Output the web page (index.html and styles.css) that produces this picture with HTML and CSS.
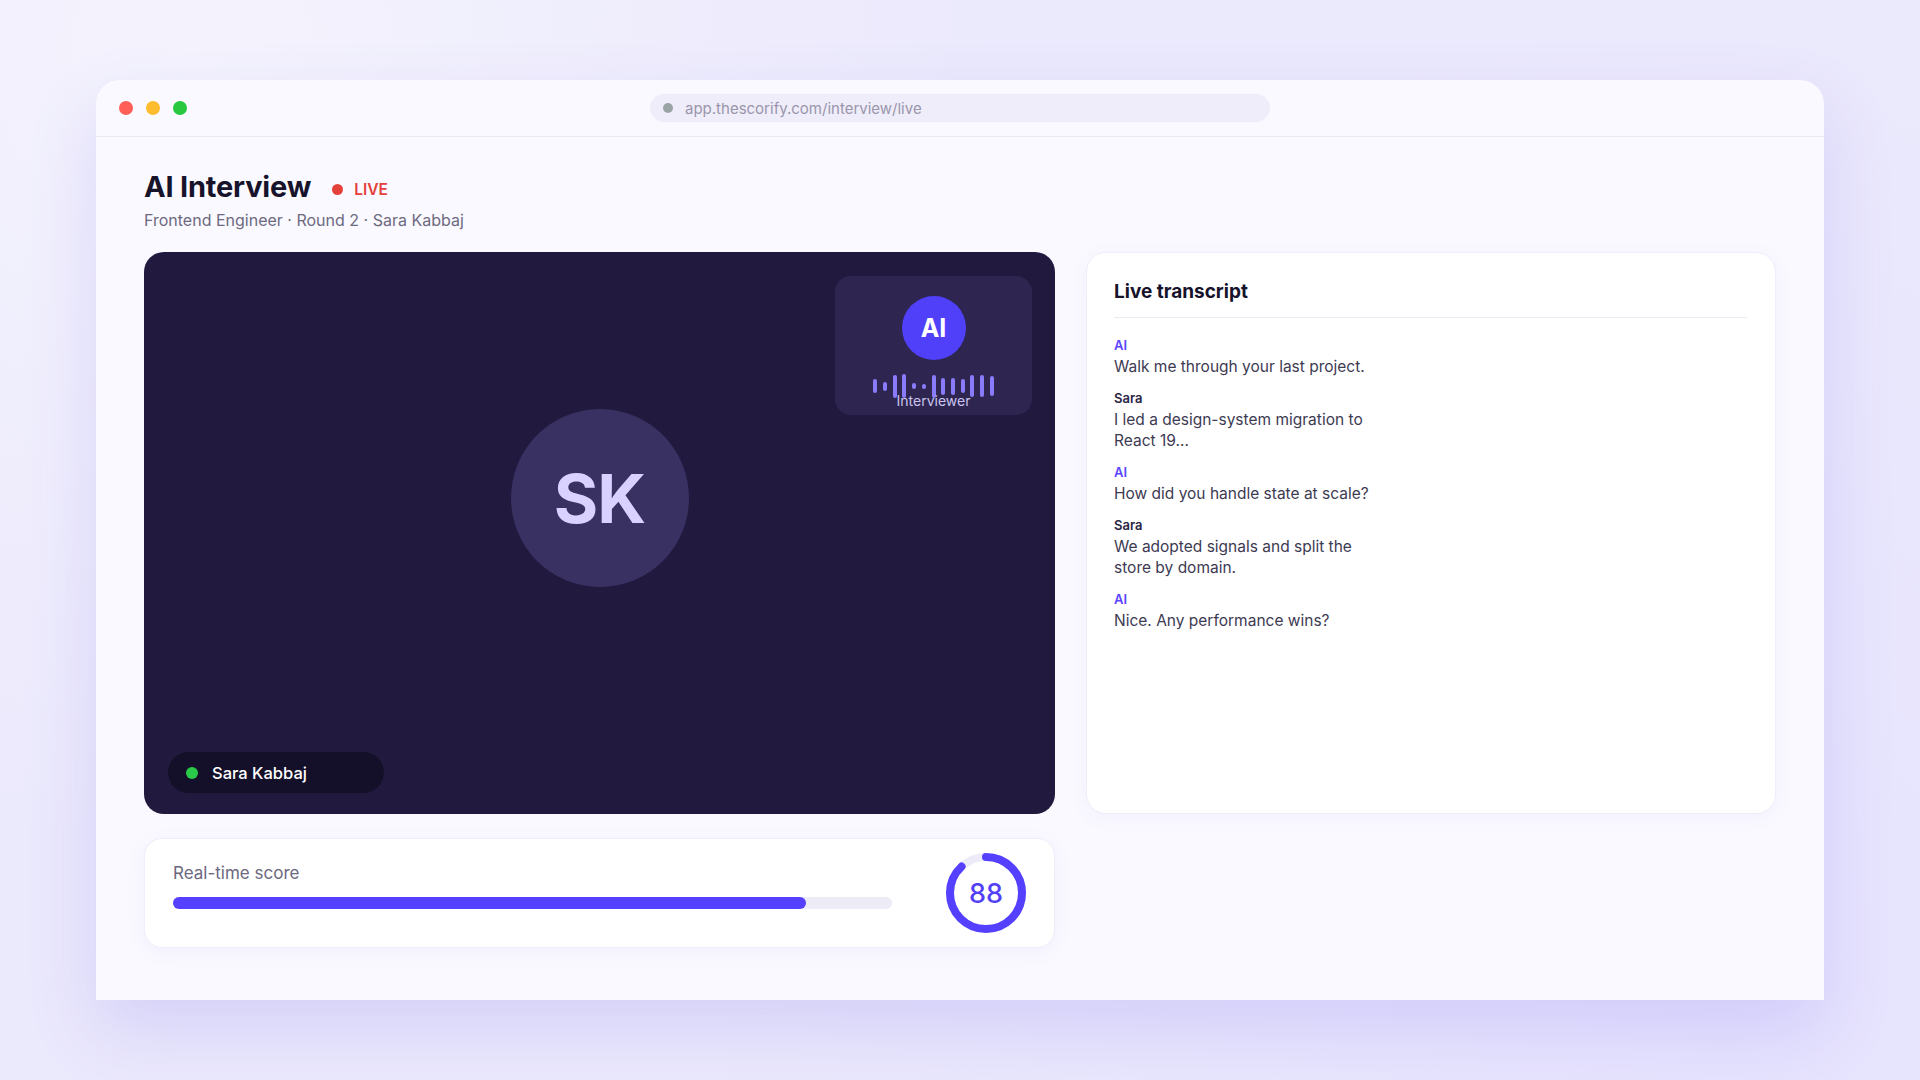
FILE: index.html
```html
<!DOCTYPE html>
<html lang="en">
<head>
<meta charset="UTF-8">
<meta name="viewport" content="width=device-width, initial-scale=1.0">
<title>AI Interview · Live</title>
<link rel="stylesheet" href="styles.css">
</head>
<body>
<div class="window">
  <div class="titlebar">
    <div class="dots">
      <span class="dot red"></span>
      <span class="dot yellow"></span>
      <span class="dot green"></span>
    </div>
    <div class="url">
      <span class="url-dot"></span>
      <span>app.thescorify.com/interview/live</span>
    </div>
    <div></div>
  </div>

  <main class="content">
    <div class="heading">
      <h1>AI Interview</h1>
      <span class="live"><span class="live-dot"></span>LIVE</span>
    </div>
    <p class="subtitle">Frontend Engineer · Round 2 · Sara Kabbaj</p>

    <div class="layout">
      <section class="stage">
        <div class="avatar">SK</div>

        <div class="ai-tile">
          <div class="ai-avatar">AI</div>
          <div class="wave">
            <span style="height:14px"></span>
            <span style="height:9px"></span>
            <span style="height:23px"></span>
            <span style="height:24px"></span>
            <span style="height:6px"></span>
            <span style="height:5px"></span>
            <span style="height:23px"></span>
            <span style="height:17px"></span>
            <span style="height:17px"></span>
            <span style="height:14px"></span>
            <span style="height:22px"></span>
            <span style="height:22px"></span>
            <span style="height:20px"></span>
          </div>
          <div class="ai-label">Interviewer</div>
        </div>

        <div class="name-pill">
          <span class="online"></span>
          Sara Kabbaj
        </div>
      </section>

      <aside class="transcript">
        <h2>Live transcript</h2>
        <div class="messages">
          <div class="msg">
            <div class="who ai">AI</div>
            <p>Walk me through your last project.</p>
          </div>
          <div class="msg">
            <div class="who">Sara</div>
            <p>I led a design-system migration to React 19…</p>
          </div>
          <div class="msg">
            <div class="who ai">AI</div>
            <p>How did you handle state at scale?</p>
          </div>
          <div class="msg">
            <div class="who">Sara</div>
            <p>We adopted signals and split the store by domain.</p>
          </div>
          <div class="msg">
            <div class="who ai">AI</div>
            <p>Nice. Any performance wins?</p>
          </div>
        </div>
      </aside>

      <section class="score-card">
        <div class="score-info">
          <div class="score-label">Real-time score</div>
          <div class="bar"><div class="bar-fill" style="width:88%"></div></div>
        </div>
        <div class="ring">
          <svg width="80" height="80" viewBox="0 0 80 80">
            <circle cx="40" cy="40" r="36" fill="none" stroke="#ecebf7" stroke-width="8"/>
            <circle cx="40" cy="40" r="36" fill="none" stroke="#5540ff" stroke-width="8"
              stroke-linecap="round" stroke-dasharray="199 227" transform="rotate(-90 40 40)"/>
          </svg>
          <span class="ring-value">88</span>
        </div>
      </section>
    </div>
  </main>
</div>
</body>
</html>
```

FILE: styles.css
```css
body {
  margin: 0;
  min-height: 1080px;
  font-family: 'Inter', 'Noto Sans', sans-serif;
  background:
    radial-gradient(circle at 10% 5%, #f4f3fd 0%, rgba(244, 243, 253, 0) 40%),
    radial-gradient(circle at 90% 95%, #e6e3fe 0%, rgba(230, 227, 254, 0) 50%),
    #ebe9fc;
  overflow: hidden;
}
.window {
  margin: 80px 96px 0;
  height: 920px;
  background: #faf9ff;
  border-radius: 24px 24px 0 0;
  box-shadow: 0 30px 70px rgba(100, 80, 230, 0.16);
}
.titlebar {
  height: 56px;
  display: grid;
  grid-template-columns: 1fr 620px 1fr;
  align-items: center;
  padding: 0 23px;
  border-bottom: 1px solid #ece9f7;
}
.dots {
  display: flex;
  gap: 13px;
}
.dot {
  width: 14px;
  height: 14px;
  border-radius: 50%;
}
.dot.red { background: #ff5f57; }
.dot.yellow { background: #febc2e; }
.dot.green { background: #28c840; }
.url {
  height: 28px;
  border-radius: 14px;
  background: #efedf9;
  display: flex;
  align-items: center;
  gap: 12px;
  padding: 0 13px;
  font-size: 15px;
  color: #9a96ad;
}
.url-dot {
  width: 10px;
  height: 10px;
  border-radius: 50%;
  background: #9aa4a4;
}

.content {
  padding: 33px 48px 0;
}
.heading {
  display: flex;
  align-items: center;
}
h1 {
  margin: 0;
  font-size: 29px;
  line-height: 34px;
  font-weight: 700;
  color: #16132b;
  letter-spacing: -0.2px;
}
.live {
  display: flex;
  align-items: center;
  gap: 11px;
  margin-left: 21px;
  margin-top: 4px;
  font-size: 15.5px;
  font-weight: 600;
  color: #e5403a;
}
.live-dot {
  width: 11px;
  height: 11px;
  border-radius: 50%;
  background: #e5403a;
}
.subtitle {
  margin: 6px 0 0;
  font-size: 16px;
  line-height: 20px;
  color: #6d6a80;
}

.layout {
  margin-top: 22px;
  display: grid;
  grid-template-columns: 911px 1fr;
  grid-template-rows: 562px auto;
  column-gap: 31px;
  row-gap: 24px;
}

/* video stage */
.stage {
  position: relative;
  background: #211a3e;
  border-radius: 20px;
  display: flex;
  align-items: center;
  justify-content: center;
  padding-bottom: 70px;
  box-sizing: border-box;
}
.avatar {
  width: 178px;
  height: 178px;
  border-radius: 50%;
  background: #3a3163;
  color: #d9d1ff;
  font-size: 68px;
  font-weight: 700;
  letter-spacing: -1px;
  display: flex;
  align-items: center;
  justify-content: center;
}
.ai-tile {
  position: absolute;
  top: 24px;
  right: 23px;
  width: 197px;
  height: 139px;
  box-sizing: border-box;
  padding-top: 20px;
  border-radius: 16px;
  background: #2e2651;
  display: flex;
  flex-direction: column;
  align-items: center;
}
.ai-avatar {
  width: 64px;
  height: 64px;
  border-radius: 50%;
  background: #5040fa;
  color: #fff;
  font-size: 25px;
  font-weight: 700;
  display: flex;
  align-items: center;
  justify-content: center;
}
.wave {
  margin-top: 14px;
  height: 24px;
  display: flex;
  align-items: center;
  gap: 5.7px;
}
.wave span {
  width: 4px;
  border-radius: 2px;
  background: #8a7bfb;
}
.ai-label {
  margin-top: -6px;
  font-size: 14px;
  line-height: 17px;
  color: #cac3ef;
}
.name-pill {
  position: absolute;
  left: 24px;
  bottom: 21px;
  width: 216px;
  height: 41px;
  box-sizing: border-box;
  padding-left: 18px;
  border-radius: 21px;
  background: #14102a;
  display: flex;
  align-items: center;
  gap: 14px;
  font-size: 16.5px;
  font-weight: 500;
  color: #fff;
}
.online {
  width: 12px;
  height: 12px;
  border-radius: 50%;
  background: #2bc94a;
}

/* transcript */
.transcript {
  background: #fff;
  border: 1px solid #efedf8;
  border-radius: 20px;
  padding: 27px 28px 27px 27px;
  box-shadow: 0 4px 20px rgba(100, 80, 230, 0.05);
}
.transcript h2 {
  margin: 0;
  padding-bottom: 13px;
  border-bottom: 1px solid #eceaf5;
  font-size: 19px;
  line-height: 24px;
  font-weight: 700;
  color: #16132b;
}
.messages {
  margin-top: 18px;
  display: flex;
  flex-direction: column;
  gap: 12px;
}
.who {
  font-size: 13px;
  line-height: 18px;
  font-weight: 600;
  color: #2a2545;
  margin-bottom: 2px;
}
.who.ai {
  color: #5b45ff;
}
.msg p {
  margin: 0;
  max-width: 268px;
  font-size: 15.5px;
  line-height: 21px;
  color: #3d3a52;
}

/* score */
.score-card {
  background: #fff;
  border: 1px solid #efedf8;
  border-radius: 18px;
  padding: 14px 28px;
  display: flex;
  align-items: center;
  gap: 54px;
  box-shadow: 0 4px 20px rgba(100, 80, 230, 0.06);
}
.score-info {
  flex: 1;
  padding-bottom: 16px;
}
.score-label {
  font-size: 17px;
  line-height: 22px;
  color: #6b6880;
}
.bar {
  margin-top: 13px;
  height: 12px;
  border-radius: 6px;
  background: #ecebf6;
}
.bar-fill {
  height: 100%;
  border-radius: 6px;
  background: #5640ff;
}
.ring {
  display: grid;
  place-items: center;
}
.ring svg,
.ring-value {
  grid-area: 1 / 1;
}
.ring-value {
  font-size: 27px;
  font-weight: 500;
  color: #5340f5;
}
```
